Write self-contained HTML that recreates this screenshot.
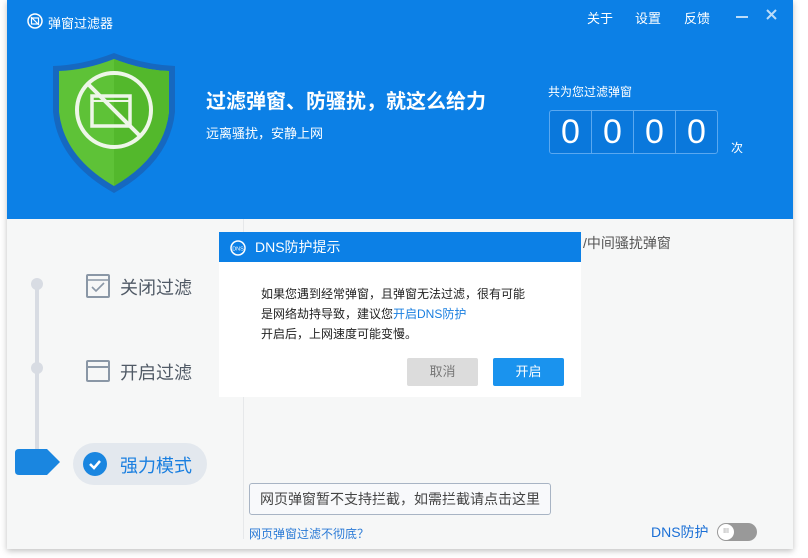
<!DOCTYPE html>
<html><head><meta charset="utf-8"><style>
*{margin:0;padding:0;box-sizing:border-box}
body{width:808px;height:558px;background:#fff;font-family:"Liberation Sans","Noto Sans CJK SC",sans-serif;position:relative;overflow:hidden}
.win{position:absolute;left:7px;top:0;width:786px;height:549px;background:#f6f7f7;box-shadow:0 2px 6px rgba(0,0,0,.25)}
.hd{position:absolute;left:0;top:0;width:786px;height:219px;background:#0c80e6}
.a{position:absolute;white-space:nowrap}
.w{color:#fff}
.cnt{position:absolute;left:542px;top:110px;width:169px;height:44px;border:1px solid #5aa8f0;border-radius:3px;background:#0a78dc;display:flex}
.cnt div{flex:1;border-right:1px solid #5aa8f0;color:#fff;font-size:34px;text-align:center;line-height:42px;font-weight:300}
.cnt div:last-child{border-right:none}
.dlg{position:absolute;left:212px;top:232px;width:362px;height:165px;background:#fff}
.dh{height:30px;background:#0c80e6;color:#fff;font-size:14px;line-height:30px;padding-left:36px}
.btn{position:absolute;top:126px;width:71px;height:28px;font-size:13px;text-align:center;line-height:28px;border-radius:2px}
</style></head><body>
<div class="win">
<div class="hd">
 <svg class="a" style="left:20px;top:13px" width="16" height="16" viewBox="0 0 16 16"><circle cx="8" cy="8" r="7" fill="none" stroke="#fff" stroke-width="1.5"/><rect x="4.5" y="5" width="7" height="6" fill="none" stroke="#fff" stroke-width="1.2"/><line x1="4" y1="4" x2="12" y2="12" stroke="#fff" stroke-width="1.2"/></svg>
 <div class="a w" style="left:41px;top:13px;font-size:13px">弹窗过滤器</div>
 <div class="a w" style="left:580px;top:8px;font-size:13px">关于</div>
 <div class="a w" style="left:628px;top:8px;font-size:13px">设置</div>
 <div class="a w" style="left:677px;top:8px;font-size:13px">反馈</div>
 <div class="a" style="left:729px;top:16px;width:12px;height:2px;background:#bcdcf8"></div>
 <svg class="a" style="left:759px;top:9px" width="11" height="11"><path d="M1 1L10 10M10 1L1 10" stroke="#bcdcf8" stroke-width="2"/></svg>
 <svg class="a" style="left:46px;top:52px" width="122" height="143" viewBox="0 0 122 143"><path d="M61 1 Q30 13 0 14 L0 60 Q5 110 61 141 Q117 110 122 60 L122 14 Q92 13 61 1Z" fill="#1668c0"/><path d="M61 7 Q33 18 6 19 L6 60 Q11 105 61 134 Q111 105 116 60 L116 19 Q89 18 61 7Z" fill="#5ec237"/><path d="M61 7 Q89 18 116 19 L116 60 Q111 105 61 134Z" fill="#53b82c"/><circle cx="61" cy="58" r="37" fill="none" stroke="#eef6e8" stroke-width="4"/><rect x="39" y="44" width="38" height="30" fill="none" stroke="#eef6e8" stroke-width="3.5"/><line x1="39" y1="49" x2="77" y2="49" stroke="#eef6e8" stroke-width="2"/><line x1="35" y1="32" x2="87" y2="84" stroke="#eef6e8" stroke-width="4"/></svg>
 <div class="a w" style="left:199px;top:85px;font-size:20px;font-weight:bold">过滤弹窗、防骚扰，就这么给力</div>
 <div class="a w" style="left:199px;top:123px;font-size:13px">远离骚扰，安静上网</div>
 <div class="a w" style="left:541px;top:83px;font-size:12px">共为您过滤弹窗</div>
 <div class="cnt"><div>0</div><div>0</div><div>0</div><div>0</div></div>
 <div class="a w" style="left:724px;top:139px;font-size:12px">次</div>
</div>
<div class="a" style="left:236px;top:219px;width:1px;height:320px;background:#e6e8ea"></div>
<div class="a" style="left:28px;top:283px;width:4px;height:172px;background:#d8dce3"></div>
<div class="a" style="left:24px;top:278px;width:12px;height:12px;border-radius:50%;background:#d8dce3"></div>
<div class="a" style="left:24px;top:362px;width:12px;height:12px;border-radius:50%;background:#d8dce3"></div>
<svg class="a" style="left:8px;top:449px" width="46" height="26"><path d="M4 0H32L45 13L32 26H4Q0 26 0 22V4Q0 0 4 0Z" fill="#1a86e0"/></svg>
<svg class="a" style="left:79px;top:274px" width="24" height="24"><rect x="1" y="1" width="22" height="22" rx="1" fill="none" stroke="#8a97a6" stroke-width="2"/><line x1="1" y1="6" x2="23" y2="6" stroke="#8a97a6" stroke-width="1.5"/><path d="M6 13L10 17L18 9" fill="none" stroke="#8a97a6" stroke-width="1.6"/></svg>
<div class="a" style="left:113px;top:274px;font-size:18px;color:#505a66">关闭过滤</div>
<svg class="a" style="left:79px;top:360px" width="24" height="22"><rect x="1" y="1" width="22" height="20" rx="1" fill="none" stroke="#8a97a6" stroke-width="2"/><line x1="1" y1="7" x2="23" y2="7" stroke="#8a97a6" stroke-width="2"/></svg>
<div class="a" style="left:113px;top:359px;font-size:18px;color:#505a66">开启过滤</div>
<div class="a" style="left:66px;top:443px;width:134px;height:42px;border-radius:21px;background:#e3e8ee"></div>
<div class="a" style="left:76px;top:452px;width:24px;height:24px;border-radius:50%;background:#1a86e0"></div>
<svg class="a" style="left:76px;top:452px" width="24" height="24"><path d="M7 12L11 16L17 9" fill="none" stroke="#fff" stroke-width="2.5"/></svg>
<div class="a" style="left:113px;top:452px;font-size:18px;color:#1a7fe0">强力模式</div>
<div class="a" style="left:576px;top:233px;font-size:14px;color:#555">/中间骚扰弹窗</div>
<div class="a" style="left:242px;top:483px;width:302px;height:32px;border:1px solid #a8b4c4;border-radius:3px;background:#f8f9fb;font-size:14px;color:#444;line-height:30px;padding-left:10px">网页弹窗暂不支持拦截，如需拦截请点击这里</div>
<div class="a" style="left:242px;top:525px;font-size:12px;color:#2a7ad6">网页弹窗过滤不彻底？</div>
<div class="a" style="left:644px;top:522px;font-size:14px;color:#1a6fd6">DNS防护</div>
<div class="a" style="left:710px;top:523px;width:40px;height:18px;border-radius:9px;background:#999"></div>
<div class="a" style="left:711px;top:524px;width:16px;height:16px;border-radius:50%;background:#fff;font-size:7px;color:#999;text-align:center;line-height:16px">III</div>
<div class="dlg">
 <div class="dh">DNS防护提示</div>
 <svg class="a" style="left:11px;top:8px" width="16" height="16"><circle cx="8" cy="8" r="7" fill="none" stroke="#fff" stroke-width="1.5"/><text x="8" y="10.5" font-size="5.5" fill="#fff" text-anchor="middle" font-family="Liberation Sans">DNS</text></svg>
 <div class="a" style="left:42px;top:52px;font-size:12px;color:#222;line-height:20px">如果您遇到经常弹窗，且弹窗无法过滤，很有可能<br>是网络劫持导致，建议您<span style="color:#1a7fe0">开启DNS防护</span><br>开启后，上网速度可能变慢。</div>
 <div class="btn" style="left:188px;background:#dcdcdc;color:#777">取消</div>
 <div class="btn" style="left:274px;background:#1a93ee;color:#fff">开启</div>
</div>
</div>
</body></html>
